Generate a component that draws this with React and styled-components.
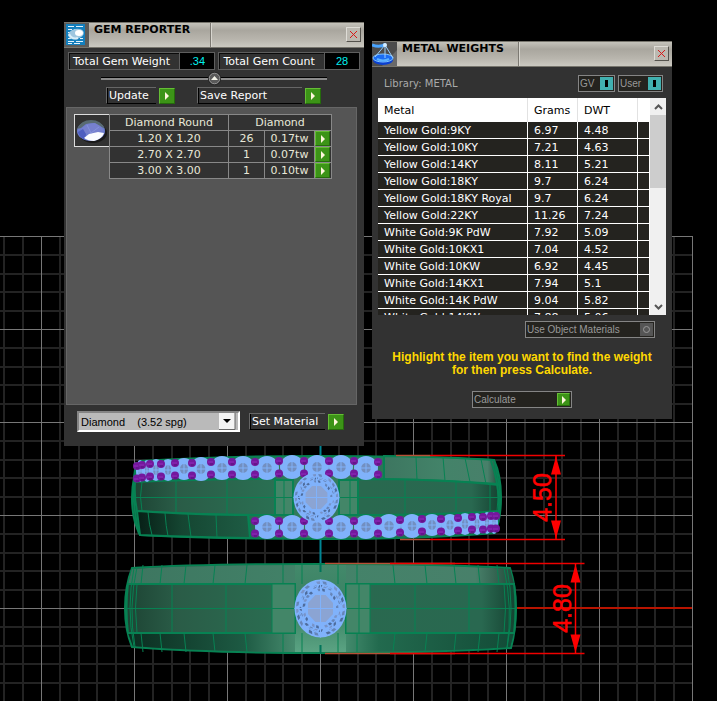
import React, { useState } from 'react';
import styled, { createGlobalStyle, css } from 'styled-components';

const GlobalStyle = createGlobalStyle`
  * {
    box-sizing: border-box;
  }

  body {
    margin: 0;
    background-color: #000;
    font-family: Verdana, 'DejaVu Sans', sans-serif;
    font-size: 11px;
    color: #fff;
  }

  button,
  select {
    font: inherit;
    color: inherit;
    margin: 0;
    padding: 0;
    border-radius: 0;
    cursor: pointer;
  }
`;

// Viewport behind the tool windows
const Desktop = styled.main`
  position: relative;
  min-height: 100vh;
  overflow: hidden;
`;

const Scene = styled.svg`
  display: block;
  width: 100%;
  height: 100vh;
`;

// Tool windows
const ToolWindow = styled.section`
  position: absolute;
  left: ${({ $left }) => $left}px;
  top: ${({ $top }) => $top}px;
  width: 300px;
  background-color: #323232;
`;

const TitleBar = styled.header`
  display: flex;
  height: 26px;
  border-top: 1px solid #77756d;
  border-bottom: 1px solid #77756d;
  background: linear-gradient(#c5c3bb, #a9a69e 30%, #b9b6ae 70%, #cbc9c1);
`;

const TitleIcon = styled.svg`
  width: 25px;
  height: 24px;
`;

const Title = styled.h2`
  width: ${({ $width }) => $width}px;
  margin: 0;
  padding-left: 5px;
  border-right: 1px solid #7c7972;
  box-shadow: 1px 0 #d8d6cf;
  font-size: 11px;
  line-height: 14px;
  color: #000;
`;

const CloseButton = styled.button`
  display: flex;
  align-items: center;
  justify-content: center;
  width: 15px;
  height: 15px;
  margin: 4px 3px 0 auto;
  border: 1px solid;
  border-color: #dedcd6 #55534d #55534d #dedcd6;
  background-color: #bbb8b0;
`;

// Gem reporter
const Stats = styled.div`
  display: flex;
  gap: 3px;
  padding: 4px 4px 0;
`;

const Stat = styled.div`
  display: flex;
  flex: ${({ $grow }) => $grow} 1 0;
  height: 18px;
  border: 1px solid #5e5e5e;
  line-height: 15px;
  white-space: nowrap;
`;

const StatLabel = styled.span`
  flex: 1;
  padding-left: 3px;
  border: 1px solid #0a0a0a;
  border-width: 1px 0 0 1px;
`;

const StatValue = styled.output`
  width: 35px;
  border-left: 1px solid #5e5e5e;
  background-color: #000;
  color: #00f0f0;
  text-align: center;
  font-family: 'Liberation Sans', Arial, sans-serif;
  font-size: 11px;
  line-height: 17px;
`;

const Divider = styled.div`
  display: flex;
  align-items: center;
  height: 16px;
  margin: 0 37px;

  &::before,
  &::after {
    content: '';
    flex: 1;
    height: 2px;
    border-top: 1px solid #000;
    background-color: #8a8a8a;
  }
`;

const CollapseButton = styled.button`
  display: flex;
  border: 0;
  background: none;
`;

const Actions = styled.div`
  display: flex;
  gap: 22px;
  padding: 1px 42px 0;
`;

const Action = styled.div`
  display: flex;
  align-items: center;
  gap: 3px;
`;

const ActionLabel = styled.label`
  width: ${({ $width }) => $width}px;
  height: 17px;
  padding-left: 2px;
  border: 1px solid #666;
  border-right: 0;
  border-bottom-color: #000;
  box-shadow: inset 1px 0 #000;
  line-height: 16px;
  white-space: nowrap;
`;

const GreenButton = styled.button`
  display: flex;
  align-items: center;
  justify-content: center;
  width: ${({ $size }) => $size || 16}px;
  height: ${({ $size }) => $size || 16}px;
  border: 1px solid;
  border-color: #65bd35 #256b0c #256b0c #65bd35;
  background-color: #3c9417;
`;

const GemList = styled.div`
  display: flex;
  align-items: flex-start;
  min-height: 298px;
  margin: 3px 7px 0 2px;
  padding: 6px 7px;
  border: 1px solid #666;
  background-color: #555;
`;

const Thumb = styled.div`
  width: 36px;
  height: 33px;
  border: 1px solid #ddd;
  background-color: #323232;
`;

const GemTable = styled.table`
  width: 222px;
  margin-left: -1px;
  border-collapse: collapse;
  table-layout: fixed;
  background-color: #323232;
  text-align: center;

  th,
  td {
    height: 16px;
    padding: 0;
    border: 1px solid #888;
    font-weight: normal;
    line-height: 15px;
    color: #e8e8d8;
  }
`;

const MaterialBar = styled.footer`
  display: flex;
  align-items: center;
  gap: 9px;
  height: 41px;
  padding: 0 20px 8px 13px;
`;

const SelectWrap = styled.div`
  display: grid;
  grid-template-columns: 1fr 19px;
  width: 163px;
  height: 21px;
  border: 2px solid;
  border-color: #858585 #fff #fff #858585;
  background-color: #bababa;
`;

const MaterialSelect = styled.select`
  grid-area: 1 / 1 / 2 / 3;
  appearance: none;
  padding-left: 2px;
  border: 0;
  background: none;
  font-family: 'Liberation Sans', Arial, sans-serif;
  font-size: 11px;
  color: #000;
`;

const SelectArrow = styled.svg`
  grid-area: 1 / 2 / 2 / 3;
  width: 17px;
  height: 17px;
  pointer-events: none;
`;

// Metal weights
const LibraryBar = styled.div`
  display: flex;
  align-items: center;
  gap: 3px;
  height: 31px;
  padding: 2px 9px 0 12px;
`;

const LibraryName = styled.span`
  flex: 1;
  font-size: 10px;
  color: #aaa;
`;

const boxed = css`
  display: flex;
  align-items: center;
  justify-content: space-between;
  height: 17px;
  padding: 0 1px;
  border: 1px solid #858585;
  background-color: #24231f;
  font-family: 'Liberation Sans', Arial, sans-serif;
  font-size: 10px;
  color: #999;
  white-space: nowrap;
`;

const Toggle = styled.label`
  ${boxed}
  width: ${({ $width }) => $width}px;
`;

const ToggleBox = styled.input`
  appearance: none;
  display: flex;
  align-items: center;
  justify-content: center;
  width: 13px;
  height: 13px;
  margin: 0;
  background-color: #555;

  &::before {
    content: '';
    box-sizing: border-box;
    width: 7px;
    height: 7px;
    border: 1px solid #999;
    border-radius: 50%;
  }

  &:checked {
    background-color: #41b0b0;
  }

  &:checked::before {
    width: 3px;
    border: 0;
    border-radius: 0;
    background-color: #000;
  }
`;

const MetalList = styled.div`
  display: flex;
  height: 217px;
  margin: 0 6px;
  overflow: hidden;
  background-color: #fff;
`;

const MetalTable = styled.table`
  flex: 1;
  align-self: flex-start;
  border-collapse: separate;
  border-spacing: 0;
  table-layout: fixed;
  text-align: left;
  white-space: nowrap;

  th {
    height: 24px;
    padding: 0 0 0 6px;
    border-right: 1px solid #e2e2e2;
    background-color: #fff;
    font-weight: normal;
    color: #000;
  }

  td {
    height: 17px;
    padding: 2px 0 0 6px;
    border-right: 1px solid #fff;
    border-bottom: 1px solid #fff;
    background-color: #24231f;
    line-height: 14px;
  }

  th:last-child,
  td:last-child {
    border-right: 0;
  }
`;

const ScrollBar = styled.div`
  display: flex;
  flex-direction: column;
  width: 17px;
  border-left: 1px solid #fff;
  background-color: #f0f0f0;
`;

const ScrollButton = styled.button`
  display: flex;
  align-items: center;
  justify-content: center;
  height: 17px;
  border: 0;
  background: none;
`;

const ScrollTrack = styled.div`
  flex: 1;

  &::before {
    content: '';
    display: block;
    height: 40%;
    background-color: #cdcdcd;
  }
`;

const ObjectRow = styled.div`
  display: flex;
  justify-content: flex-end;
  padding: 6px 17px 0;
`;

const Message = styled.p`
  margin: 13px 0 14px;
  font-family: 'Liberation Sans', Arial, sans-serif;
  font-size: 12px;
  font-weight: bold;
  line-height: 13px;
  text-align: center;
  color: #ffd800;
`;

const CalculateRow = styled.div`
  display: flex;
  justify-content: center;
  padding-bottom: 11px;
`;

const Calculate = styled.div`
  ${boxed}
  width: 100px;
`;

const gems = [
  { size: '1.20 X 1.20', count: 26, weight: '0.17tw' },
  { size: '2.70 X 2.70', count: 1, weight: '0.07tw' },
  { size: '3.00 X 3.00', count: 1, weight: '0.10tw' },
];

const metals = [
  ['Yellow Gold:9KY', '6.97', '4.48'],
  ['Yellow Gold:10KY', '7.21', '4.63'],
  ['Yellow Gold:14KY', '8.11', '5.21'],
  ['Yellow Gold:18KY', '9.7', '6.24'],
  ['Yellow Gold:18KY Royal', '9.7', '6.24'],
  ['Yellow Gold:22KY', '11.26', '7.24'],
  ['White Gold:9K PdW', '7.92', '5.09'],
  ['White Gold:10KX1', '7.04', '4.52'],
  ['White Gold:10KW', '6.92', '4.45'],
  ['White Gold:14KX1', '7.94', '5.1'],
  ['White Gold:14K PdW', '9.04', '5.82'],
  ['White Gold:14KW', '7.88', '5.06'],
];

const Play = () => (
  <svg width="6" height="8" viewBox="0 0 6 8">
    <path d="M1 0v8l4-4z" fill="#fff6dc" />
  </svg>
);

const Cross = () => (
  <svg width="9" height="9" viewBox="0 0 9 9">
    <path d="M1 1l7 7M8 1l-7 7" stroke="#d81818" strokeWidth="1" />
  </svg>
);

// Grid: a major line every 93px, four minor ones in between
const Grid = () => {
  const lines = [];
  for (let i = -2; i <= 35; i += 1) {
    const x = 41.5 + i * 18.6;
    const major = i % 5 === 0;
    lines.push({ key: `v${i}`, major, d: `M${major ? x : Math.round(x)} 236V2000` });
  }
  for (let i = 0; i <= 95; i += 1) {
    const y = 236.5 + i * 18.6;
    const major = i % 5 === 0;
    lines.push({ key: `h${i}`, major, d: `M0 ${major ? y : Math.round(y)}H693` });
  }
  lines.sort((a, b) => a.major - b.major);
  return lines.map(({ key, major, d }) => (
    <path key={key} d={d} stroke={major ? '#777' : '#232323'} strokeWidth={major ? 1 : 2} />
  ));
};

const polar = (cx, cy, rx, ry, step, steps) => {
  const a = ((step + 0.5) / steps) * Math.PI * 2;
  return [(cx + Math.cos(a) * rx).toFixed(1), (cy + Math.sin(a) * ry).toFixed(1)];
};

const corners = [0, 1, 2, 3, 4, 5, 6, 7];

// Large round stone with its facet mesh
const CenterGem = ({ cx, cy, rx, ry }) => {
  const facets = [];
  for (let band = 0; band < 3; band += 1) {
    for (let i = 0; i < 24; i += 1) {
      const r0 = 0.6 + band * 0.125;
      const r1 = r0 + 0.09;
      if ((i * 7 + band * 5) % 11 < 3) continue;
      const skew = band % 2 ? 0.3 : -0.2;
      const pts = [
        polar(cx, cy, rx * r0, ry * r0, i, 24),
        polar(cx, cy, rx * r0, ry * r0, i + 0.6, 24),
        polar(cx, cy, rx * r1, ry * r1, i + 0.6 + skew, 24),
        polar(cx, cy, rx * r1, ry * r1, i + skew, 24),
      ];
      facets.push(
        <polygon
          key={`${band}-${i}`}
          points={pts.join(' ')}
          fill={['#4e6c9c', '#7793c8', '#6685b8'][(i + band) % 3]}
        />
      );
    }
  }
  const table = corners.map((i) => polar(cx, cy, rx * 0.56, ry * 0.54, i, 8));
  const star = corners.map((i) => polar(cx, cy, rx * 0.84, ry * 0.84, i + 0.5, 8));
  return (
    <g stroke="none">
      <ellipse cx={cx} cy={cy} rx={rx} ry={ry} fill="#80b2fb" />
      {facets}
      <polygon points={star.join(' ')} fill="none" stroke="#80b2fb" />
      <polygon points={table.join(' ')} fill="#8ba4d3" stroke="#80b2fb" strokeWidth="2" />
      <path
        d={`M${cx - rx} ${cy}H${cx + rx}M${cx} ${cy - ry}V${cy + ry}`}
        stroke="#80b2fb"
        strokeWidth="1"
      />
    </g>
  );
};

const topStones = [
  [140, 471, 4], [147, 471, 5], [156, 470, 7], [168, 470, 8], [184, 469, 10], [201, 469, 11],
  [222, 468, 12], [243, 468, 12], [267, 468, 12], [292, 467, 12], [317, 467, 12], [341, 467, 12],
  [366, 468, 12],
];

const bottomStones = [
  [267, 527, 12], [292, 527, 12], [317, 527, 12], [341, 527, 12], [366, 527, 12], [389, 526, 12],
  [412, 526, 11], [432, 525, 10], [450, 525, 9], [465, 524, 8], [477, 524, 6], [487, 523, 5],
  [494, 523, 4],
];

const topProngs = [
  [137, 466], [142, 465], [150, 464], [161, 464], [175, 463], [192, 463], [211, 462], [232, 462],
  [255, 462], [279, 461], [304, 461], [329, 461], [354, 461], [378, 462],
];

const bottomProngs = [
  [255, 521], [279, 521], [304, 521], [329, 521], [354, 521], [378, 521], [400, 520], [422, 519],
  [441, 519], [458, 518], [472, 517], [483, 517], [491, 516], [496, 516],
];

const Pave = ({ stones, prongs }) => (
  <g stroke="none">
    {stones.map(([x, y, r]) => (
      <g key={x}>
        <ellipse cx={x} cy={y} rx={r} ry={r > 10 ? 12 : 11} fill="#80b2fb" />
        <ellipse cx={x} cy={y} rx={r * 0.4} ry="5" fill="#728fc0" />
        <path d={`M${x} ${y - 6}v12M${x - r / 2} ${y}h${r}`} stroke="#80b2fb" strokeWidth="1" />
      </g>
    ))}
    {prongs.map(([x, y]) => (
      <g key={x} fill="#74189d">
        <circle cx={x} cy={y} r="4" />
        <circle cx={x} cy={y + 12.5} r="4" />
        <path d={`M${x - 3} ${y}h5M${x - 3} ${y + 13}h5`} stroke="#8f2bba" />
        <path d={`M${x - 1} ${y + 2}h3M${x - 1} ${y + 15}h3`} stroke="#56127a" />
      </g>
    ))}
  </g>
);

const TopRing = () => (
  <g stroke="#078253" fill="none">
    <path
      d="M140 461Q225 456 317 456T494 460Q501 475 501 497T495 533Q420 539 317 539T140 535Q132 520 132 498T140 461z"
      fill="url(#shell)"
      strokeWidth="2"
    />
    <path d="M384 456Q450 457 494 460L499 484Q440 480 384 479z" fill="url(#band)" strokeWidth="2" />
    <path d="M135 482Q200 479 275 479V515Q200 515 137 511Q134 497 135 482z" fill="url(#channel)" strokeWidth="2" />
    <path d="M358 479Q440 479 499 485Q501 497 499 511Q440 515 358 515z" fill="url(#channelRight)" strokeWidth="2" />
    <path d="M137 511Q200 515 248 515L250 538Q190 537 140 535z" fill="url(#lower)" strokeWidth="2" />
    <path d="M275 480h18v35h-18zM339 480h19v35h-19z" fill="#438668" strokeWidth="2" />
    <path d="M284 480v35M350 480v35M132 497.500H294M339 497.500H501" />
    <path d="M142 482q-3 15 0 29M176 480v34M227 480v35M405 480v35M456 481v33M490 483v29M497 485q2 13 0 26" />
    <path d="M148 512q1 13 4 23M165 513q1 14 3 23M188 514l3 23M216 515l1 23M248 515l5 23" />
    <path d="M416 457l1 23M443 457l2 24M465 458l5 24M481 459l5 25" />
    <path d="M136 462q-6 35 3 72M491 461q9 25 8 50l-4 22" strokeWidth="2" />
    <Pave stones={topStones} prongs={topProngs} />
    <Pave stones={bottomStones} prongs={bottomProngs} />
    <CenterGem cx={316.5} cy={497.5} rx={23} ry={25} />
  </g>
);

const bandLines = [18, 37, 73, 105, 134, 158, 177];

const BottomRing = () => (
  <g stroke="#078253" fill="none">
    <path
      d="M132 568Q200 564 320 564T510 568Q516 586 516 608T511 648Q430 653 320 653T132 647Q125 630 125 608T132 568z"
      fill="url(#shell)"
      strokeWidth="2"
    />
    <path d="M132 569Q200 565 320 565T510 569L514 584H128z" fill="url(#band)" stroke="none" />
    <path d="M128 633H514L510 647Q430 652 320 652T133 646z" fill="url(#lowerWide)" stroke="none" />
    <path d="M295 565h51v87h-51z" fill="url(#glow)" stroke="none" />
    <path d="M128 584H295V633H128Q125 608 128 584z" fill="url(#channel)" strokeWidth="2" />
    <path d="M346 584H514Q517 608 514 633H346z" fill="url(#channelRight)" strokeWidth="2" />
    <path d="M272 584h23v49h-23zM346 584h24v49h-24z" fill="#438668" />
    <path d="M359 584v49M125 608.500H295M346 608.500H516" />
    <path d="M137 584q-3 24 0 49M172 584v49M226 584v49M415 584v49M469 584v49M504 584q3 24 0 49" />
    {bandLines.map((offset) => {
      const lean = offset > 60 ? 2 : 0;
      return (
        <path
          key={offset}
          d={`M${320 - offset} 565l${-lean} 19M${320 + offset} 565l${lean} 19M${320 - offset - lean} 633l${lean} 19M${320 + offset + lean} 633l${-lean} 19`}
        />
      );
    })}
    <path d="M134 568q-8 40 0 79M137 567q-9 40-2 80M507 568q8 40 0 80M504 568q9 40 3 80" />
    <path d="M320.500 564v8M320.500 645v8" stroke="#00755a" strokeWidth="2" />
    <CenterGem cx={320.5} cy={608.5} rx={26} ry={29} />
  </g>
);

// Vertical dimension with extension lines and arrow heads
const Dimension = ({ x, top, bottom, from, label }) => (
  <g stroke="#f00" fill="#f00">
    <path d={`M${from} ${top}H${x + 9}M${from} ${bottom}H${x + 9}`} stroke="#f00000" strokeWidth="1.500" />
    <path d={`M${x} ${top}V${bottom}`} strokeWidth="1.500" />
    <path
      d={`M${x} ${top + 1}l5 18h-10zM${x} ${bottom - 1}l5-18h-10z`}
      stroke="none"
    />
    <text
      transform={`translate(${x - 5} ${(top + bottom) / 2}) rotate(-90)`}
      textAnchor="middle"
      fontFamily="'Liberation Sans', Arial, sans-serif"
      fontSize="25"
      strokeWidth="0.500"
    >
      {label}
    </text>
  </g>
);

const Model = () => (
  <Scene aria-label="Ring model">
    <defs>
      <linearGradient id="shell">
        <stop offset="0" stopColor="#174331" />
        <stop offset="0.3" stopColor="#256c50" />
        <stop offset="0.5" stopColor="#38805f" />
        <stop offset="0.8" stopColor="#276b51" />
        <stop offset="1" stopColor="#154936" />
      </linearGradient>
      <linearGradient id="band">
        <stop offset="0" stopColor="#3d7660" />
        <stop offset="0.5" stopColor="#438369" />
        <stop offset="0.9" stopColor="#48806a" />
        <stop offset="1" stopColor="#234b3b" />
      </linearGradient>
      <linearGradient id="channel">
        <stop offset="0" stopColor="#1d4434" />
        <stop offset="0.3" stopColor="#2a5c47" />
        <stop offset="1" stopColor="#2a7053" />
      </linearGradient>
      <linearGradient id="channelRight">
        <stop offset="0" stopColor="#29694f" />
        <stop offset="0.8" stopColor="#296850" />
        <stop offset="1" stopColor="#154231" />
      </linearGradient>
      <linearGradient id="lower">
        <stop offset="0" stopColor="#071f16" />
        <stop offset="0.4" stopColor="#154632" />
        <stop offset="1" stopColor="#1e5c44" />
      </linearGradient>
      <linearGradient id="lowerWide">
        <stop offset="0" stopColor="#0b2d20" />
        <stop offset="0.3" stopColor="#1d5a43" />
        <stop offset="0.5" stopColor="#5ba383" />
        <stop offset="0.65" stopColor="#226a4e" />
        <stop offset="1" stopColor="#134b37" />
      </linearGradient>
      <linearGradient id="glow" x2="0" y2="1">
        <stop offset="0" stopColor="#43896b" />
        <stop offset="0.5" stopColor="#388061" />
        <stop offset="1" stopColor="#5ba383" />
      </linearGradient>
    </defs>
    <Grid />
    <path d="M320.500 440V564" stroke="#008594" strokeWidth="2" />
    <path d="M516 608H692" stroke="#b81400" strokeWidth="2" />
    <TopRing />
    <BottomRing />
    <path d="M325 563.500H455M325 653.500H455M396 455.500H430M400 539.500H430" stroke="#b75036" strokeWidth="1.500" />
    <Dimension x={556} top={455.5} bottom={539.5} from={430} label="4.50" />
    <Dimension x={575.5} top={563.5} bottom={653.5} from={390} label="4.80" />
  </Scene>
);

const GemReporter = () => {
  const [material, setMaterial] = useState('diamond');

  return (
    <ToolWindow $left={64} $top={22}>
      <TitleBar>
        <TitleIcon viewBox="0 0 25 24">
          <path d="M0 0h25v24H0z" fill="#5b5b59" />
          <path d="M2 1h19v21H2z" fill="#137fbd" />
          <path
            d="M4 3.500h6m2 0h7M4 6.500h4m2 0h5M4 9.500h3M4 12.500h2M4 15.500h3m9 0h3M4 18.500h6m2 0h7M4 20.500h4m2 0h6"
            stroke="#e2f1fa"
          />
          <ellipse cx="12" cy="11" rx="8" ry="5" fill="#9ec6df" transform="rotate(-12 12 11)" />
          <ellipse cx="15" cy="10" rx="4" ry="3" fill="#fff" />
          <path d="M5 11q3 6 9 4" stroke="#d8edf8" strokeWidth="2" fill="none" />
        </TitleIcon>
        <Title $width={122}>GEM REPORTER</Title>
        <CloseButton aria-label="Close gem reporter">
          <Cross />
        </CloseButton>
      </TitleBar>
      <Stats>
        <Stat $grow={147}>
          <StatLabel>Total Gem Weight</StatLabel>
          <StatValue>.34</StatValue>
        </Stat>
        <Stat $grow={141}>
          <StatLabel>Total Gem Count</StatLabel>
          <StatValue>28</StatValue>
        </Stat>
      </Stats>
      <Divider>
        <CollapseButton aria-label="Collapse">
          <svg width="13" height="13" viewBox="0 0 13 13">
            <circle cx="6.500" cy="6.500" r="5.500" fill="#5a5a5a" stroke="#aaa" />
            <circle cx="6.500" cy="6.500" r="6.200" fill="none" stroke="#111" strokeWidth="0.600" />
            <path d="M3 8l3.500-4L10 8z" fill="#f2f2e8" />
          </svg>
        </CollapseButton>
      </Divider>
      <Actions>
        <Action>
          <ActionLabel $width={50} htmlFor="update">Update</ActionLabel>
          <GreenButton id="update"><Play /></GreenButton>
        </Action>
        <Action>
          <ActionLabel $width={105} htmlFor="save">Save Report</ActionLabel>
          <GreenButton id="save"><Play /></GreenButton>
        </Action>
      </Actions>
      <GemList>
        <Thumb>
          <svg width="34" height="31" viewBox="0 0 34 31">
            <ellipse cx="18" cy="18" rx="14" ry="10" fill="#191919" />
            <ellipse cx="16" cy="16" rx="14" ry="10" fill="#6c7cce" />
            <path d="M2 14Q6 5 16 5t14 9l-5-3-6-3-8 1-5 4z" fill="#596b72" />
            <path d="M12 9l8-1 5 3 4 5-12 3-9-1-2-4z" fill="#7680ce" />
            <path d="M3 17l5-3 3 5-1 6q-6-3-7-8z" fill="#4e5ec0" />
            <path d="M9 23l5-4 9-2 6 1q-2 6-10 8-6 0-10-3z" fill="#fbfcff" />
            <path d="M12 10l4 8 8-6" fill="none" stroke="#8593dc" />
          </svg>
        </Thumb>
        <GemTable>
          <colgroup>
            <col width="119" />
            <col width="36" />
            <col width="50" />
            <col width="17" />
          </colgroup>
          <thead>
            <tr>
              <th>Diamond Round</th>
              <th colSpan={3}>Diamond</th>
            </tr>
          </thead>
          <tbody>
            {gems.map((gem) => (
              <tr key={gem.size}>
                <td>{gem.size}</td>
                <td>{gem.count}</td>
                <td>{gem.weight}</td>
                <td>
                  <GreenButton $size={15} aria-label={`Select ${gem.size}`}><Play /></GreenButton>
                </td>
              </tr>
            ))}
          </tbody>
        </GemTable>
      </GemList>
      <MaterialBar>
        <SelectWrap>
          <MaterialSelect
            aria-label="Material"
            value={material}
            onChange={(e) => setMaterial(e.target.value)}
          >
            <option value="diamond">{'Diamond\u00a0\u00a0\u00a0\u00a0(3.52 spg)'}</option>
          </MaterialSelect>
          <SelectArrow viewBox="0 0 17 17">
            <path d="M0 0h16v16H0z" fill="#f3f3f3" />
            <path d="M16 0v16.500H0" fill="none" stroke="#666" />
            <path d="M4 6h8l-4 4z" fill="#000" />
          </SelectArrow>
        </SelectWrap>
        <Action>
          <ActionLabel $width={76} htmlFor="set-material">Set Material</ActionLabel>
          <GreenButton id="set-material"><Play /></GreenButton>
        </Action>
      </MaterialBar>
    </ToolWindow>
  );
};

const MetalWeights = () => (
  <ToolWindow $left={372} $top={41}>
    <TitleBar>
      <TitleIcon viewBox="0 0 25 24">
        <path d="M0 0h25v24H0z" fill="#4c4c4c" />
        <path d="M25 8v16H10z" fill="#696969" />
        <ellipse cx="11" cy="18" rx="10" ry="5" fill="#0a3fd0" />
        <ellipse cx="11" cy="16" rx="10" ry="4" fill="#1b6cf2" stroke="#7fc4ff" />
        <path d="M0 3q8 3 14-1" stroke="#49a4ff" strokeWidth="3" fill="none" />
        <path d="M13 3L3 15M13 3v13M13 3l8 13" stroke="#9bd0ff" fill="none" />
        <circle cx="13" cy="3" r="2" fill="#d6eeff" />
        <path d="M5 17q6 3 12 0" stroke="#5cb2ff" strokeWidth="2" fill="none" />
      </TitleIcon>
      <Title $width={122}>METAL WEIGHTS</Title>
      <CloseButton aria-label="Close metal weights">
        <Cross />
      </CloseButton>
    </TitleBar>
    <LibraryBar>
      <LibraryName>Library: METAL</LibraryName>
      <Toggle $width={37}>
        GV
        <ToggleBox type="checkbox" defaultChecked />
      </Toggle>
      <Toggle $width={45}>
        User
        <ToggleBox type="checkbox" defaultChecked />
      </Toggle>
    </LibraryBar>
    <MetalList>
      <MetalTable>
        <colgroup>
          <col width="150" />
          <col width="50" />
          <col width="60" />
          <col width="11" />
        </colgroup>
        <thead>
          <tr>
            <th>Metal</th>
            <th>Grams</th>
            <th>DWT</th>
            <th />
          </tr>
        </thead>
        <tbody>
          {metals.map(([name, grams, dwt]) => (
            <tr key={name}>
              <td>{name}</td>
              <td>{grams}</td>
              <td>{dwt}</td>
              <td />
            </tr>
          ))}
        </tbody>
      </MetalTable>
      <ScrollBar>
        <ScrollButton aria-label="Scroll up">
          <svg width="9" height="6" viewBox="0 0 9 6">
            <path d="M1 5l3.500-3.500L8 5" fill="none" stroke="#555" strokeWidth="2" />
          </svg>
        </ScrollButton>
        <ScrollTrack />
        <ScrollButton aria-label="Scroll down">
          <svg width="9" height="6" viewBox="0 0 9 6">
            <path d="M1 1l3.500 3.500L8 1" fill="none" stroke="#555" strokeWidth="2" />
          </svg>
        </ScrollButton>
      </ScrollBar>
    </MetalList>
    <ObjectRow>
      <Toggle $width={130}>
        Use Object Materials
        <ToggleBox type="checkbox" />
      </Toggle>
    </ObjectRow>
    <Message>
      Highlight the item you want to find the weight
      <br />
      for then press Calculate.
    </Message>
    <CalculateRow>
      <Calculate>
        <label htmlFor="calculate">Calculate</label>
        <GreenButton id="calculate" $size={13}><Play /></GreenButton>
      </Calculate>
    </CalculateRow>
  </ToolWindow>
);

const App = () => (
  <Desktop>
    <GlobalStyle />
    <Model />
    <GemReporter />
    <MetalWeights />
  </Desktop>
);

export default App;
